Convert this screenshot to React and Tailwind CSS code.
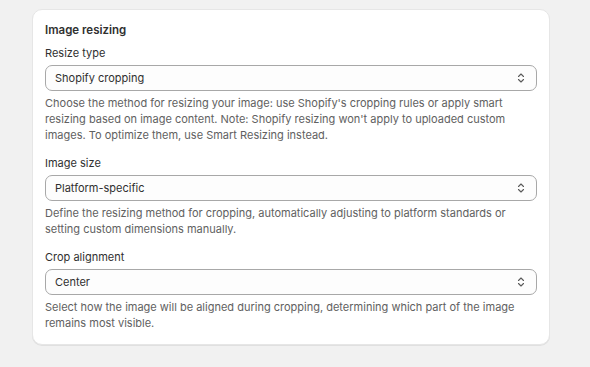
import React from "react";

const fields = [
  {
    id: "resizeType",
    label: "Resize type",
    value: "Shopify cropping",
    help: "Choose the method for resizing your image: use Shopify's cropping rules or apply smart resizing based on image content. Note: Shopify resizing won't apply to uploaded custom images. To optimize them, use Smart Resizing instead.",
  },
  {
    id: "imageSize",
    label: "Image size",
    value: "Platform-specific",
    help: "Define the resizing method for cropping, automatically adjusting to platform standards or setting custom dimensions manually.",
  },
  {
    id: "cropAlignment",
    label: "Crop alignment",
    value: "Center",
    help: "Select how the image will be aligned during cropping, determining which part of the image remains most visible.",
  },
];

const SelectIcon = () => (
  <svg width="8" height="12" viewBox="0 0 8 12" fill="none" className="text-[#5a5a5a]">
    <path d="M1.5 4.5L4 2L6.5 4.5" stroke="currentColor" strokeWidth="1.1" strokeLinecap="round" strokeLinejoin="round" />
    <path d="M1.5 7.5L4 10L6.5 7.5" stroke="currentColor" strokeWidth="1.1" strokeLinecap="round" strokeLinejoin="round" />
  </svg>
);

const Field = ({ id, label, value, help }) => (
  <div className="flex flex-col">
    <label htmlFor={id} className="text-[11px] leading-4 text-[#303030]">
      {label}
    </label>
    <button
      id={id}
      type="button"
      className="mt-1 flex h-[26px] w-full items-center justify-between rounded-[7px] border border-[#a8a8a8] bg-[#fdfdfd] pl-[9px] pr-[11px] text-left text-[11px] text-[#303030]"
    >
      <span>{value}</span>
      <SelectIcon />
    </button>
    <p className="mt-1 text-[11px] leading-4 text-[#616161]">{help}</p>
  </div>
);

const App = () => {
  return (
    <div
      className="min-h-[367px] w-full bg-[#f1f1f1] pl-8 pt-[9px]"
      style={{ fontFamily: "Inter, 'Liberation Sans', sans-serif" }}
    >
      <div className="w-[518px] rounded-[10px] border border-[#e6e6e6] bg-white px-3 pt-3 pb-[13px] shadow-[0_1px_0_0_rgba(26,26,26,0.08)]">
        <h2 className="text-[11.5px] font-semibold leading-4 text-[#303030]">Image resizing</h2>
        <div className="mt-[7px] flex flex-col gap-3">
          {fields.map((f) => (
            <Field key={f.id} {...f} />
          ))}
        </div>
      </div>
    </div>
  );
};

export default App;
